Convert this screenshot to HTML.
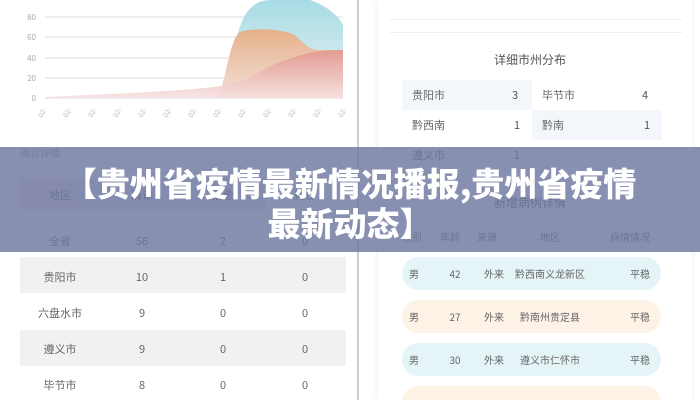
<!DOCTYPE html>
<html><head><meta charset="utf-8"><style>
*{margin:0;padding:0;box-sizing:border-box}
html,body{width:700px;height:400px;overflow:hidden}
body{background:#fff;font-family:"Noto Sans CJK SC","Liberation Sans",sans-serif;position:relative;color:#777}
.a{position:absolute;line-height:14px}
.t{position:absolute;font-size:11px;line-height:14px;color:#666;transform:translateX(-50%);white-space:nowrap}
.row{position:absolute;left:20px;width:326px;height:36px;background:#f1f1f3}
.pill{position:absolute;left:402px;width:259px;height:33px;border-radius:17px}
</style></head><body>
<div class="a" style="left:357px;top:0;width:2px;height:400px;background:#ccc"></div>
<div class="a" style="left:378px;top:0;width:314px;height:400px;background:#fff;box-shadow:0 0 6px rgba(0,0,0,0.08)"></div>
<svg class="a" style="left:0;top:0" width="357" height="140">
<defs>
<linearGradient id="g1" x1="0" y1="0" x2="0" y2="1"><stop offset="0" stop-color="#a8dbe4"/><stop offset="1" stop-color="#e8f3f5"/></linearGradient>
<linearGradient id="g2" x1="0" y1="0" x2="0" y2="1"><stop offset="0" stop-color="#e6b08a"/><stop offset="1" stop-color="#f2e0d8"/></linearGradient>
<linearGradient id="g3" x1="0" y1="0" x2="0" y2="1"><stop offset="0" stop-color="#e2958e"/><stop offset="1" stop-color="#f6e0e0"/></linearGradient>
</defs>
<g stroke="#ddd" stroke-width="1">
<line x1="45" y1="17" x2="343" y2="17"/><line x1="45" y1="37" x2="343" y2="37"/><line x1="45" y1="58" x2="343" y2="58"/><line x1="45" y1="78" x2="343" y2="78"/><line x1="45" y1="98" x2="343" y2="98"/>
</g>
<g font-size="8" fill="#aaa" text-anchor="end"><text x="36" y="20">80</text><text x="36" y="40">60</text><text x="36" y="61">40</text><text x="36" y="81">20</text><text x="36" y="101">0</text></g>
<path d="M220 98 C228 90 232 40 245 15 C255 0 265 0 275 0 L310 0 C325 5 338 15 343 25 L343 98Z" fill="url(#g1)"/>
<path d="M215 98 C225 95 228 40 240 32 C250 28 280 28 295 35 C305 45 310 50 320 50 L343 50 L343 98Z" fill="url(#g2)"/>
<path d="M45 97 C100 94 180 92 230 85 C250 80 260 70 280 62 C300 55 315 50 343 50 L343 98 L45 98Z" fill="url(#g3)" opacity="0.85"/>
<g font-size="7" fill="#bbb">
<text transform="translate(42,118) rotate(-60)">02-</text><text transform="translate(67,118) rotate(-60)">02-</text><text transform="translate(92,118) rotate(-60)">02-</text><text transform="translate(117,118) rotate(-60)">02-</text><text transform="translate(142,118) rotate(-60)">02-</text><text transform="translate(167,118) rotate(-60)">02-</text><text transform="translate(192,118) rotate(-60)">02-</text><text transform="translate(217,118) rotate(-60)">02-</text><text transform="translate(242,118) rotate(-60)">02-</text><text transform="translate(267,118) rotate(-60)">02-</text><text transform="translate(292,118) rotate(-60)">02-</text><text transform="translate(317,118) rotate(-60)">02-</text><text transform="translate(342,118) rotate(-60)">02-</text>
</g>
</svg>
<div class="a" style="left:20px;top:146px;font-size:10px;color:#999">确诊详情</div>
<div class="a" style="left:20px;top:178px;width:55px;height:32px;background:#f0e4dc"></div>
<div class="a" style="left:75px;top:178px;width:190px;height:32px;background:#e0e8f2"></div>
<div class="row" style="top:257px"></div>
<div class="row" style="top:330px"></div>
<span class="t" style="left:60px;top:188px">地区</span><span class="t" style="left:142px;top:188px">确诊</span><span class="t" style="left:223px;top:188px">治愈</span><span class="t" style="left:305px;top:188px">死亡</span>
<span class="t" style="left:60px;top:234px">全省</span><span class="t" style="left:142px;top:234px">56</span><span class="t" style="left:223px;top:234px">2</span><span class="t" style="left:305px;top:234px">0</span>
<span class="t" style="left:60px;top:270px">贵阳市</span><span class="t" style="left:142px;top:270px">10</span><span class="t" style="left:223px;top:270px">1</span><span class="t" style="left:305px;top:270px">0</span>
<span class="t" style="left:60px;top:306px">六盘水市</span><span class="t" style="left:142px;top:306px">9</span><span class="t" style="left:223px;top:306px">0</span><span class="t" style="left:305px;top:306px">0</span>
<span class="t" style="left:60px;top:342px">遵义市</span><span class="t" style="left:142px;top:342px">9</span><span class="t" style="left:223px;top:342px">0</span><span class="t" style="left:305px;top:342px">0</span>
<span class="t" style="left:60px;top:378px">毕节市</span><span class="t" style="left:142px;top:378px">8</span><span class="t" style="left:223px;top:378px">0</span><span class="t" style="left:305px;top:378px">0</span>
<div class="a" style="left:390px;top:19px;width:292px;height:1px;background:#eee"></div>
<div class="a" style="left:390px;top:32px;width:292px;height:1px;background:#eee"></div>
<span class="t" style="left:530px;top:53px;font-size:12px;color:#555">详细市州分布</span>
<div class="a" style="left:402px;top:80px;width:130px;height:30px;background:#f3f7fb"></div>
<div class="a" style="left:532px;top:110px;width:130px;height:30px;background:#f3f7fb"></div>
<span class="a" style="left:412px;top:88px;font-size:11px;color:#666">贵阳市</span><span class="a" style="left:512px;top:88px;font-size:11px;color:#555">3</span>
<span class="a" style="left:542px;top:88px;font-size:11px;color:#666">毕节市</span><span class="a" style="left:642px;top:88px;font-size:11px;color:#555">4</span>
<span class="a" style="left:412px;top:118px;font-size:11px;color:#666">黔西南</span><span class="a" style="left:514px;top:118px;font-size:11px;color:#555">1</span>
<span class="a" style="left:542px;top:118px;font-size:11px;color:#666">黔南</span><span class="a" style="left:644px;top:118px;font-size:11px;color:#555">1</span>
<span class="a" style="left:412px;top:148px;font-size:11px;color:#666">遵义市</span><span class="a" style="left:514px;top:148px;font-size:11px;color:#555">1</span>
<span class="t" style="left:530px;top:196px;font-size:12px;color:#555">新增病例详情</span>
<span class="t" style="left:412px;top:230px;font-size:10px">性别</span><span class="t" style="left:450px;top:230px;font-size:10px">年龄</span><span class="t" style="left:487px;top:230px;font-size:10px">来源</span><span class="t" style="left:550px;top:230px;font-size:10px">地区</span><span class="t" style="left:630px;top:230px;font-size:10px">病情情况</span>
<div class="pill" style="top:257px;background:#e5f4f6"></div>
<div class="pill" style="top:300px;background:#fcf2e5"></div>
<div class="pill" style="top:343px;background:#e5f4f6"></div>
<div class="pill" style="top:386px;background:#fcf2e5"></div>
<span class="t" style="left:414px;top:267px;font-size:10px">男</span><span class="t" style="left:455px;top:267px;font-size:10px">42</span><span class="t" style="left:494px;top:267px;font-size:10px">外来</span><span class="t" style="left:550px;top:267px;font-size:10px">黔西南义龙新区</span><span class="t" style="left:640px;top:267px;font-size:10px">平稳</span>
<span class="t" style="left:414px;top:310px;font-size:10px">男</span><span class="t" style="left:455px;top:310px;font-size:10px">27</span><span class="t" style="left:494px;top:310px;font-size:10px">外来</span><span class="t" style="left:550px;top:310px;font-size:10px">黔南州贵定县</span><span class="t" style="left:640px;top:310px;font-size:10px">平稳</span>
<span class="t" style="left:414px;top:353px;font-size:10px">男</span><span class="t" style="left:455px;top:353px;font-size:10px">30</span><span class="t" style="left:494px;top:353px;font-size:10px">外来</span><span class="t" style="left:550px;top:353px;font-size:10px">遵义市仁怀市</span><span class="t" style="left:640px;top:353px;font-size:10px">平稳</span>
<div class="a" style="left:0;top:147px;width:700px;height:105px;background:rgba(110,120,160,0.82)"></div>
<div class="a" style="left:0;top:162px;width:700px;text-align:center;color:#fff;font-weight:900;font-size:33px;line-height:40px;letter-spacing:0px;font-family:'Noto Sans CJK SC',sans-serif">【贵州省疫情最新情况播报,贵州省疫情<br>最新动态】</div>
</body></html>
